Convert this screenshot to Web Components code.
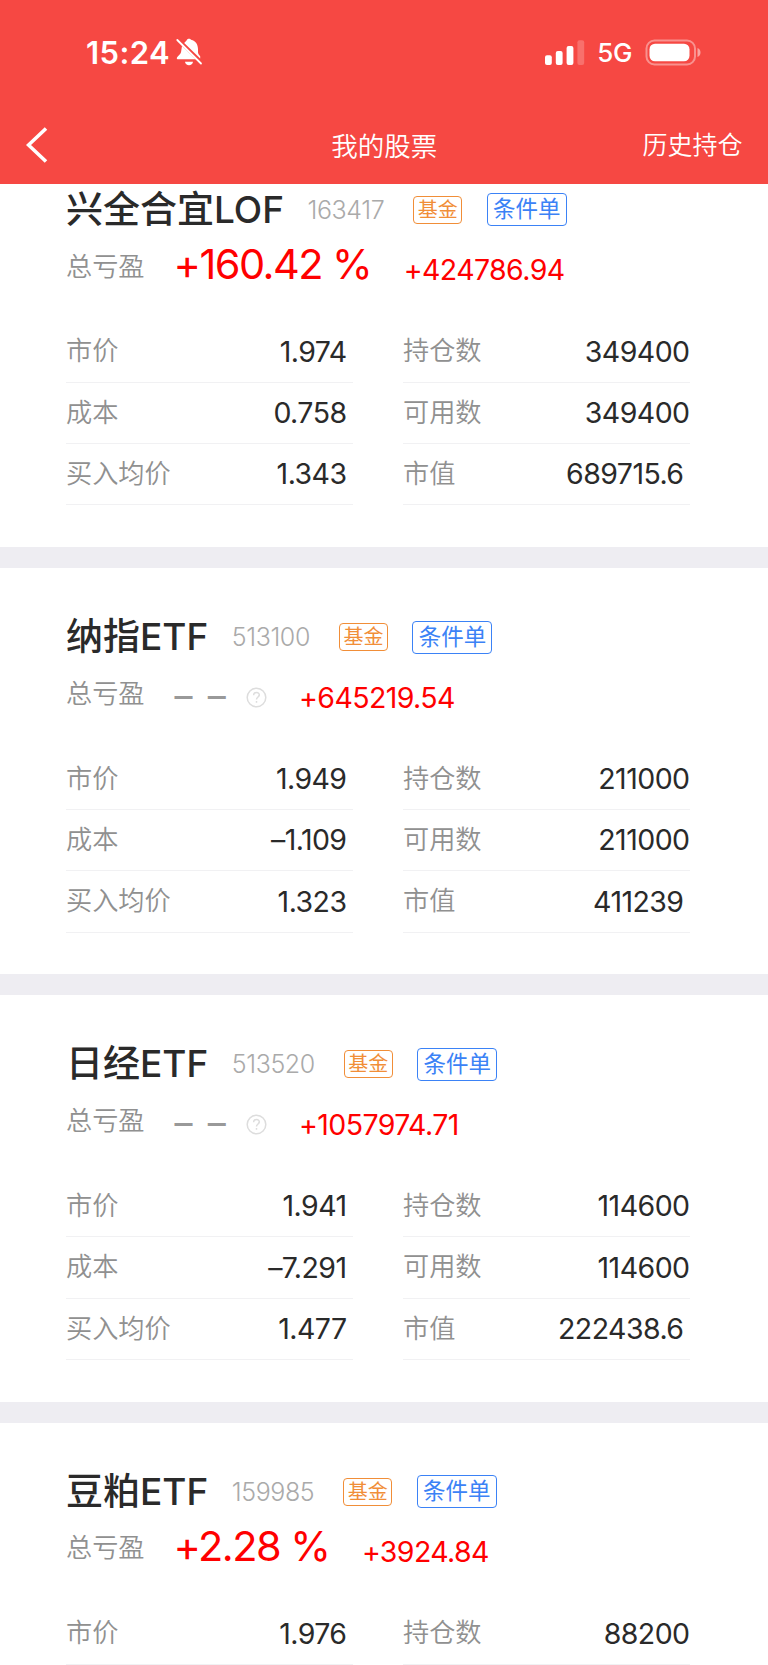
<!DOCTYPE html>
<html lang="zh-CN">
<head>
<meta charset="UTF-8">
<title>我的股票</title>
<style>
html, body {
    margin: 0;
    height: 1665px;
    overflow: hidden;
    background: #fff;
    font-family: Inter, "Noto Sans CJK SC", sans-serif;
    line-height: 1;
}
</style>
</head>
<body>
<stock-app></stock-app>
<script>
const STOCKS = [
  {
    name: "兴全合宜LOF", code: "163417", percent: "+160.42 %", profit: "+424786.94",
    rows: [["市价", "1.974"], ["持仓数", "349400"], ["成本", "0.758"], ["可用数", "349400"], ["买入均价", "1.343"], ["市值", "689715.6"]],
  },
  {
    name: "纳指ETF", code: "513100", percent: "", profit: "+645219.54",
    rows: [["市价", "1.949"], ["持仓数", "211000"], ["成本", "–1.109"], ["可用数", "211000"], ["买入均价", "1.323"], ["市值", "411239"]],
  },
  {
    name: "日经ETF", code: "513520", percent: "", profit: "+1057974.71",
    rows: [["市价", "1.941"], ["持仓数", "114600"], ["成本", "–7.291"], ["可用数", "114600"], ["买入均价", "1.477"], ["市值", "222438.6"]],
  },
  {
    name: "豆粕ETF", code: "159985", percent: "+2.28 %", profit: "+3924.84",
    rows: [["市价", "1.976"], ["持仓数", "88200"]],
  },
];

class StatusBar extends HTMLElement {
  constructor() {
    super();
    this.attachShadow({ mode: "open" }).innerHTML = `
<style>
:host {
    display: flex;
    align-items: center;
    justify-content: space-between;
    height: 104px;
    padding: 0 66px 0 86px;
    box-sizing: border-box;
    color: #fff;
}
div {
    display: flex;
    align-items: center;
}
.time {
    padding-top: 1px;
    font-size: 31px;
    font-weight: 600;
    letter-spacing: 0.4px;
}
.network {
    padding-top: 2px;
    font-size: 26px;
    font-weight: 500;
    letter-spacing: -0.4px;
    margin: 0 13px 0 12px;
}
svg {
    display: block;
}
.bell {
    margin-left: 6px;
}
</style>
<div>
    <span class="time">15:24</span>
    <svg class="bell" width="27" height="28" viewBox="0 0 27 28" fill="#fff">
        <path d="M8.2 5C9.500 3.500 10.500 3 11 1.800C11.500 1 12.200.700 13 .700S14.500 1 15 1.800C19.800 3 21.800 6.300 22 11V14.500C22.200 16 23 17 24.200 18.200V20.400Z"/>
        <path d="M6 8L19.700 21.300H2.200C.900 21.300.500 20.300 1 19.400C2 17.700 4.500 16.500 5 14.300Z"/>
        <path d="M9 23.800H17C16.800 26 15 27.300 13 27.300S9.200 26 9 23.800Z"/>
        <path d="M1.300 2L25 25.500" stroke="#fff" stroke-width="1.800" stroke-linecap="round"/>
    </svg>
</div>
<div>
    <svg width="40" height="25" viewBox="0 0 40 25" fill="#fff">
        <rect x="0" y="15.300" width="6.800" height="9.700" rx="2"/>
        <rect x="10.800" y="11" width="6.800" height="14" rx="2"/>
        <rect x="21.600" y="6" width="6.800" height="19" rx="2"/>
        <rect x="32.400" y="0.300" width="6.800" height="24.700" rx="2" opacity=".22"/>
    </svg>
    <span class="network">5G</span>
    <svg width="57" height="27" viewBox="0 0 57 27" fill="#fff">
        <rect x="1.500" y="1.500" width="48.500" height="24" rx="8" fill="none" stroke="#fff" stroke-width="2" opacity=".4"/>
        <rect x="4.500" y="4.700" width="40" height="17.600" rx="5.500"/>
        <path d="M52.500 9C56.500 10.500 56.500 16.500 52.500 18Z" opacity=".5"/>
    </svg>
</div>`;
  }
}

class NavBar extends HTMLElement {
  constructor() {
    super();
    this.attachShadow({ mode: "open" }).innerHTML = `
<style>
:host {
    display: grid;
    grid-template-columns: 1fr auto 1fr;
    align-items: center;
    height: 80px;
    padding: 3.5px 25.5px 0 26px;
    box-sizing: border-box;
    color: #fff;
    font-weight: 350;
}
.title {
    font-size: 26.5px;
}
.action {
    justify-self: end;
    font-size: 25px;
}
svg {
    display: block;
    margin-top: -1px;
}
</style>
<svg width="22" height="36" viewBox="0 0 22 36" fill="none" stroke="#fff" stroke-width="3.600">
    <path d="M20 1.500L2.500 18L20 34.500"/>
</svg>
<span class="title"><slot></slot></span>
<span class="action"><slot name="action"></slot></span>`;
  }
}

class StockRow extends HTMLElement {
  constructor() {
    super();
    this.attachShadow({ mode: "open" }).innerHTML = `
<style>
:host {
    display: flex;
    justify-content: space-between;
    align-items: center;
    height: 61.3px;
    padding: 0 var(--row-end, 0) 0 0;
    box-sizing: border-box;
    border-bottom: 1.5px solid #f1f1f3;
    font-size: 28.5px;
    color: #2a2a2a;
}
.label {
    font-size: 26.2px;
    font-weight: 350;
    color: #909090;
}
.number {
    padding-top: 1px;
    letter-spacing: -0.55px;
}
</style>
<span class="label"></span>
<span class="number"><slot></slot></span>`;
  }

  connectedCallback() {
    this.shadowRoot.querySelector(".label").textContent = this.getAttribute("label");
  }
}

class StockCard extends HTMLElement {
  connectedCallback() {
    const stock = this.stock;
    const percent = stock.percent
      ? `<span class="percent">${stock.percent}</span>`
      : `<span class="dash">–</span><span class="dash">–</span>
    <svg width="21" height="21" viewBox="0 0 21 21" fill="none" stroke="#ddd" stroke-width="1.500">
        <circle cx="10.500" cy="10.500" r="9.300"/>
        <path d="M7.600 8.200C7.800 4.600 13.600 4.800 13.300 8.200C13.100 10 10.500 10.100 10.500 12.400M10.500 14V15.800"/>
    </svg>`;
    const rows = stock.rows
      .map(([label, value]) => `<stock-row label="${label}">${value}</stock-row>`)
      .join("");
    this.attachShadow({ mode: "open" }).innerHTML = `
<style>
:host {
    display: block;
    height: 427.3px;
    padding: 46px 78.5px 0 66px;
    box-sizing: border-box;
    border-bottom: 21px solid #eeedf2;
    background: #fff;
}
.head, .profit-line {
    display: flex;
    align-items: center;
    white-space: nowrap;
}
.head {
    height: 46px;
}
.name {
    margin-top: -1px;
    font-size: 37px;
    font-weight: 500;
    color: #2a2a2a;
}
.code {
    margin-left: 23.5px;
    padding-top: 1px;
    font-size: 25px;
    font-weight: 300;
    letter-spacing: -0.4px;
    color: #aaa;
}
.tag {
    box-sizing: border-box;
    border: 1.5px solid currentColor;
    border-radius: 4px;
    text-align: center;
}
.fund {
    width: 49px;
    height: 28px;
    margin-left: 29px;
    line-height: 26px;
    font-size: 20px;
    color: #f18e38;
}
.order {
    width: 80px;
    height: 33px;
    margin-left: 24.5px;
    line-height: 30px;
    font-size: 22.5px;
    color: #3b82f6;
}
.profit-line {
    height: 64px;
    color: #f00;
}
.label {
    width: 107.5px;
    margin-top: 4px;
    font-size: 26.2px;
    font-weight: 350;
    color: #909090;
}
.percent {
    margin-top: 1px;
    font-size: 41.5px;
    letter-spacing: -1.55px;
}
.profit {
    margin: 12px 0 0 32.5px;
    font-size: 28.5px;
    letter-spacing: -0.6px;
}
.dash {
    width: 33.3px;
    margin-top: 8px;
    font-size: 36px;
    text-indent: 1px;
    color: #999;
}
svg {
    margin: 11px 0 0 5.5px;
}
.grid {
    display: grid;
    grid-template-columns: 286.5px 286.5px;
    justify-content: space-between;
    margin-top: 24.7px;
}
stock-row:nth-child(odd), stock-row:nth-child(6) {
    --row-end: 6px;
}
</style>
<div class="head">
    <span class="name">${stock.name}</span>
    <span class="code">${stock.code}</span>
    <span class="tag fund">基金</span>
    <span class="tag order">条件单</span>
</div>
<div class="profit-line">
    <span class="label">总亏盈</span>
    ${percent}
    <span class="profit">${stock.profit}</span>
</div>
<div class="grid">${rows}</div>`;
  }
}

class StockApp extends HTMLElement {
  constructor() {
    super();
    this.attachShadow({ mode: "open" }).innerHTML = `
<style>
:host {
    display: flex;
    flex-direction: column;
    width: 768px;
    height: 1665px;
    overflow: hidden;
}
header {
    flex: none;
    height: 184px;
    background: #f64843;
}
main {
    flex: 1;
    min-height: 0;
    overflow: hidden;
}
/* 列表已向上滚动一小段 */
.list {
    margin-top: -43.3px;
}
</style>
<header>
    <status-bar></status-bar>
    <nav-bar>我的股票<span slot="action">历史持仓</span></nav-bar>
</header>
<main><div class="list"></div></main>`;
    const list = this.shadowRoot.querySelector(".list");
    STOCKS.forEach((stock) => {
      const card = document.createElement("stock-card");
      card.stock = stock;
      list.appendChild(card);
    });
  }
}

customElements.define("status-bar", StatusBar);
customElements.define("nav-bar", NavBar);
customElements.define("stock-row", StockRow);
customElements.define("stock-card", StockCard);
customElements.define("stock-app", StockApp);
</script>
</body>
</html>
